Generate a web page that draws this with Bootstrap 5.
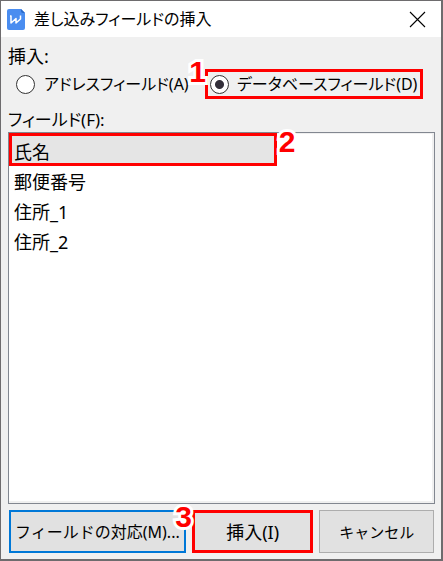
<!DOCTYPE html>
<html lang="ja">
<head>
<meta charset="utf-8">
<meta name="viewport" content="width=device-width, initial-scale=1">
<title>差し込みフィールドの挿入</title>
<link href="https://cdn.jsdelivr.net/npm/bootstrap@5.3.0/dist/css/bootstrap.min.css" rel="stylesheet">
<style>
body{font:18px/24px "Noto Sans","Noto Sans CJK JP",sans-serif;font-feature-settings:"palt";color:#000;background:#f0f0f0}
.dialog{border:1px solid #6e6c6e;border-right-width:2px;border-bottom-width:2px}
.titlebar{height:36px;background:#fff;padding:0 15px 0 6px;gap:9px}
.titlebar h1{font-size:16px;line-height:24px;font-weight:400}
.close-x{line-height:0}
.dialog-main{padding:7px 6px 6px 7px}
.radio-row{height:30px;margin-top:1px}
.radio-row .form-check-input{width:19px;height:19px;margin:0;border:1px solid #333;background-color:#fff;flex:none}
.radio-row .form-check-input:checked{background-image:radial-gradient(circle,#332f3a 4px,transparent 5px)}
.radio-row label{white-space:nowrap;font-size:16px}
.radio-a{width:197px;padding-left:8px;gap:9px}
.radio-b{width:218px;height:30px;gap:8px;padding-left:2px}
.marked{border:3px solid #f00}
.field-label{margin-top:9px;font-size:17px}
.field-list{border:1px solid #828790;background:#fff;box-shadow:inset -2px -2px #f0f0f0,inset 0 1px #f0f0f0}
.field-list .list-group-item{height:30px;padding:3px 5px 1px;border:0;background:transparent;color:#000;line-height:26px}
.field-list .list-group-item.marked{width:63%;height:33px;padding:4px 2px 0;background:#e5e5e5;border:3px solid #f00;line-height:24px}
.actions{padding:6px 1px 0;gap:6px}
.actions .btn{--bs-btn-border-radius:0;height:43px;padding:0;font-size:16px;line-height:24px;color:#000;background:#e1e1e1;white-space:nowrap;min-width:0}
.actions .btn-match{flex:178 1 0;border:2px solid #0078d7}
.actions .btn-insert{flex:119 1 0;border:3px solid #f00;font-size:18px}
.actions .btn-quit{flex:116 1 0;border:1px solid #adadad;font-size:15px}
.step{position:absolute;z-index:2;font:700 30px/30px "Liberation Sans",sans-serif;color:#f00;-webkit-text-stroke:6px #fff;paint-order:stroke fill;pointer-events:none}
.step-1{right:100%;top:-15px;margin-right:2px}
.step-2{left:63%;top:-6px;margin-left:2px}
.step-3{right:100%;top:-11px;margin-right:3px}
</style>
<script src="https://cdn.jsdelivr.net/npm/bootstrap@5.3.0/dist/js/bootstrap.bundle.min.js" defer></script>
</head>
<body>
<div class="dialog vh-100 d-flex flex-column" role="dialog" aria-labelledby="dialog-title">
  <header class="titlebar d-flex align-items-center">
    <svg width="18" height="21" viewBox="0 0 18 21" aria-hidden="true"><path d="M2 0H14L18 4V19Q18 21 16 21H2Q0 21 0 19V2Q0 0 2 0Z" fill="#4a8df0"/><path d="M14 0V2Q14 4 16 4H18Z" fill="#2868c7"/><path d="M3 7H4V14L9 9.5V14L13.5 10V6.5" fill="none" stroke="#fff" stroke-width="1.5" stroke-linejoin="round"/></svg>
    <h1 id="dialog-title" class="mb-0">差し込みフィールドの挿入</h1>
    <button type="button" class="close-x ms-auto p-0 border-0 bg-transparent" aria-label="閉じる"><svg width="17" height="17" viewBox="0 0 17 17" aria-hidden="true"><path d="M1 1L16 16M16 1L1 16" stroke="#000" stroke-width="1.1"/></svg></button>
  </header>
  <main class="dialog-main d-flex flex-column flex-grow-1">
    <div id="insert-label">挿入:</div>
    <div class="radio-row d-flex align-items-center" role="radiogroup" aria-labelledby="insert-label">
      <div class="radio-a d-flex align-items-center">
        <input class="form-check-input" type="radio" name="kind" id="kind-a">
        <label for="kind-a">アドレスフィールド(A)</label>
      </div>
      <div class="radio-b marked position-relative d-flex align-items-center">
        <span class="step step-1">1</span>
        <input class="form-check-input" type="radio" name="kind" id="kind-d" checked>
        <label for="kind-d">データベースフィールド(D)</label>
      </div>
    </div>
    <div class="field-label" id="field-label">フィールド(F):</div>
    <div class="field-list list-group rounded-0 flex-grow-1 position-relative" aria-labelledby="field-label">
      <button type="button" class="list-group-item list-group-item-action marked">氏名</button>
      <button type="button" class="list-group-item list-group-item-action">郵便番号</button>
      <button type="button" class="list-group-item list-group-item-action">住所_1</button>
      <button type="button" class="list-group-item list-group-item-action">住所_2</button>
      <span class="step step-2">2</span>
    </div>
    <div class="actions d-flex">
      <button type="button" class="btn btn-match">フィールドの対応(M)...</button>
      <button type="button" class="btn btn-insert position-relative"><span class="step step-3">3</span>挿入(I)</button>
      <button type="button" class="btn btn-quit">キャンセル</button>
    </div>
  </main>
</div>
</body>
</html>
